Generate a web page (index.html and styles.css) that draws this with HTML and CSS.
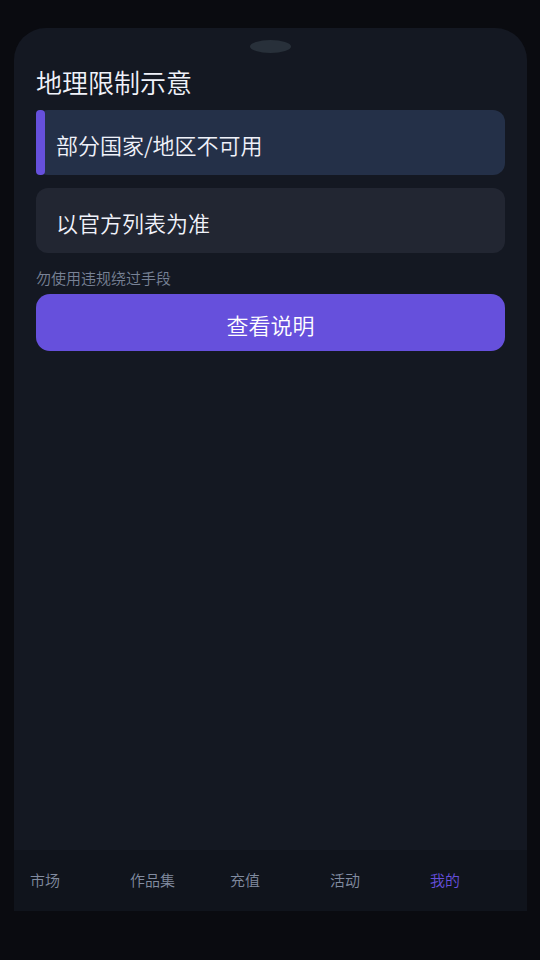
FILE: index.html
```html
<!DOCTYPE html>
<html lang="zh-CN">
<head>
    <meta charset="UTF-8">
    <meta name="viewport" content="width=device-width, initial-scale=1.0">
    <title>地理限制示意</title>
    <link rel="stylesheet" href="styles.css">
</head>
<body>
    <div class="screen">
        <div class="notch"></div>

        <main class="content">
            <h1>地理限制示意</h1>
            <ul class="card-list">
                <li class="card card-active">部分国家/地区不可用</li>
                <li class="card">以官方列表为准</li>
            </ul>
            <p class="hint">勿使用违规绕过手段</p>
            <button class="primary-button" type="button">查看说明</button>
        </main>

        <nav class="tab-bar">
            <a href="#market">市场</a>
            <a href="#portfolio">作品集</a>
            <a href="#topup">充值</a>
            <a href="#events">活动</a>
            <a href="#me" class="active" aria-current="page">我的</a>
        </nav>
    </div>
</body>
</html>
```

FILE: styles.css
```css
* {
    margin: 0;
    padding: 0;
    box-sizing: border-box;
}

body {
    min-height: 100vh;
    padding: 28px 13px 49px 14px;
    display: flex;
    background-color: #0a0b10;
    color: #f0f2fa;
    font-family: "Noto Sans CJK SC", sans-serif;
    font-weight: 350;
}

.screen {
    flex: 1;
    display: flex;
    flex-direction: column;
    background-color: #141822;
    border-radius: 32px 32px 0 0;
}

.notch {
    width: 41px;
    height: 13px;
    margin: 12px auto 0;
    border-radius: 50%;
    background-color: #28303a;
}

.content {
    flex: 1;
    padding: 9px 22px;
}

h1 {
    margin-bottom: 8px;
    font-size: 26px;
    font-weight: 350;
    line-height: 40px;
}

.card-list {
    display: grid;
    gap: 13px;
    list-style: none;
}

.card {
    padding: 18px 20px 15px;
    border-radius: 12px;
    background-color: #222632;
    font-size: 22px;
    line-height: 32px;
}

.card-active {
    position: relative;
    background-color: #243048;
}

/* accent strip on the left edge */
.card-active::before {
    content: "";
    position: absolute;
    top: 0;
    bottom: 0;
    left: 0;
    width: 9px;
    border-radius: 4px;
    background-color: #6650dc;
}

.hint {
    margin: 14px 0 5px;
    color: #788296;
    font-size: 15px;
    line-height: 22px;
}

.primary-button {
    display: block;
    width: 100%;
    padding: 14px 20px 11px;
    border: none;
    border-radius: 14px;
    background-color: #6650dc;
    color: #fff;
    font-family: inherit;
    font-size: 22px;
    font-weight: 350;
    line-height: 32px;
    cursor: pointer;
}

.tab-bar {
    display: grid;
    grid-template-columns: repeat(5, 1fr);
    padding-right: 13px;
    background-color: #10141c;
}

.tab-bar a {
    padding: 19px 0 20px 16px;
    color: #828ca0;
    font-size: 15px;
    line-height: 22px;
    text-decoration: none;
}

.tab-bar a.active {
    color: #6650dc;
}
```
